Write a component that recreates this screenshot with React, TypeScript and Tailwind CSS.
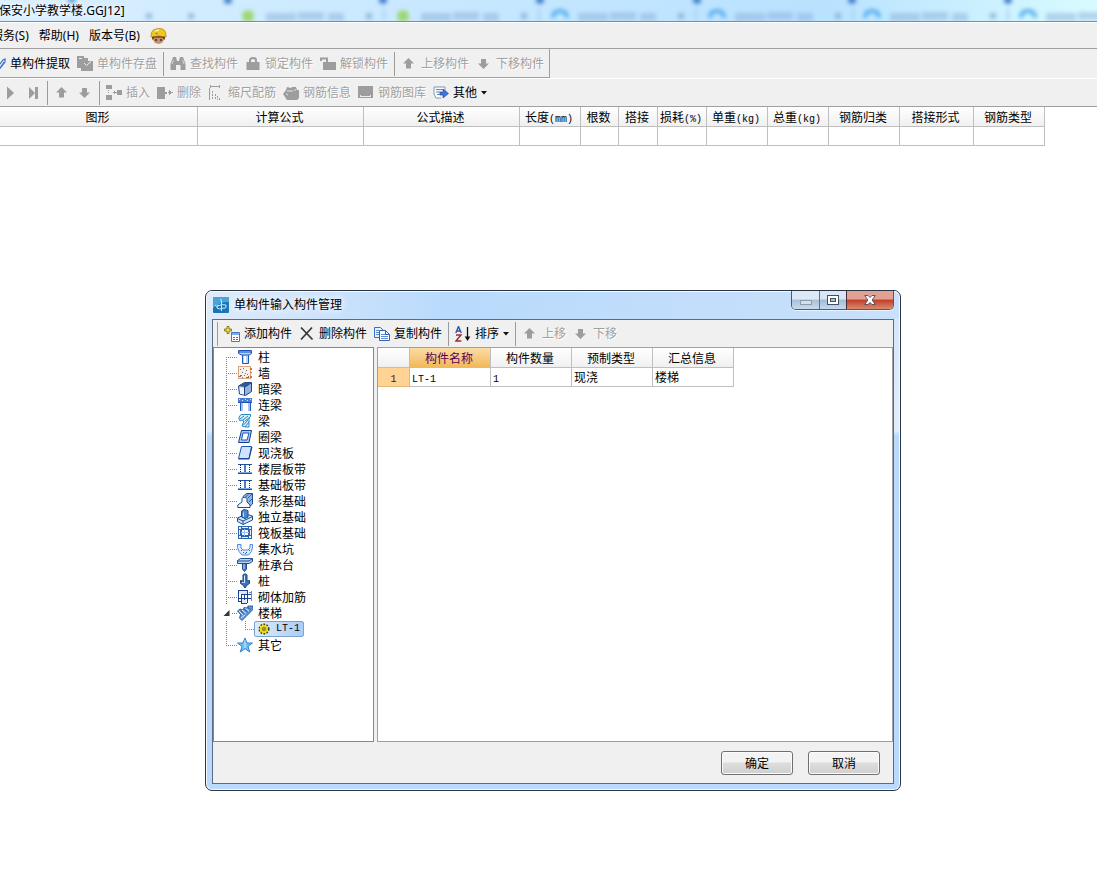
import type { ReactNode } from 'react';

const BLUE = '#1f55b5';
const GRAY = '#9d9d9d';

type IconProps = { children: ReactNode; crisp?: boolean };

const Icon = ({ children, crisp = false }: IconProps) => (
  <svg
    viewBox="0 0 16 16"
    className="h-4 w-4 shrink-0"
    fill="none"
    shapeRendering={crisp ? 'crispEdges' : 'auto'}
    aria-hidden="true"
  >
    {children}
  </svg>
);

/* Toolbar icons */
const UpIcon = () => (
  <Icon>
    <path d="M7.500 2l5.500 5.500h-3v5H5v-5H2z" fill={GRAY} />
  </Icon>
);

const DownIcon = () => (
  <Icon>
    <path d="M7.500 13L2 7.500h3V3h5v4.500h3z" fill={GRAY} />
  </Icon>
);

const PlayIcon = () => (
  <Icon>
    <path d="M5 1.500L12 8l-7 6.500z" fill={GRAY} />
  </Icon>
);

const LastIcon = () => (
  <Icon>
    <path d="M4 2l6 6V2h3v12h-3V8l-6 6z" fill={GRAY} />
  </Icon>
);

const PencilIcon = () => (
  <Icon>
    <path d="M6 13l7-9 2-1v3l-5 6.500H6z" stroke="#3c6ec4" strokeWidth="1.200" fill="#dfeaff" />
    <path d="M10 12l4-6" stroke="#3c6ec4" />
  </Icon>
);

const SaveIcon = () => (
  <Icon crisp>
    <path d="M0 0h7v2h4v3H5v7H0z" fill={GRAY} />
    <path d="M5 5h11v10H4V7h1z" fill={GRAY} />
    <path d="M2 2h3v1H2zM12 3h1v2h-1z" fill="#efefef" />
    <path d="M7 7l2.500 2.500L14 5.500" stroke="#efefef" shapeRendering="auto" />
  </Icon>
);

const BinocularIcon = () => (
  <Icon>
    <path d="M3 1h3l1 4h2l1-4h3l2.500 7v6h-5V9H6v5H.5V8z" fill={GRAY} />
    <path d="M3.500 4L2 8M12.500 4L14 8" stroke="#d8d8d8" />
  </Icon>
);

const LockIcon = () => (
  <Icon>
    <path d="M5 7V4.500Q5 2 8 2t3 2.500V7" stroke={GRAY} strokeWidth="2" />
    <path d="M1.500 6h13v8h-13z" fill={GRAY} />
  </Icon>
);

const UnlockIcon = () => (
  <Icon>
    <path d="M1 5V2.500h6V7" stroke={GRAY} strokeWidth="2" />
    <path d="M3 6h13v8H3z" fill={GRAY} />
  </Icon>
);

const InsertIcon = () => (
  <Icon crisp>
    <path d="M0 0h6v4H0zM0 10h6v5H0zM11 5h5v5h-5zM7 7h4v1H7zM8 6h1v3H8z" fill={GRAY} />
    <path d="M2 5h1v1H2zM2 7h1v1H2z" fill={GRAY} />
  </Icon>
);

const RemoveIcon = () => (
  <Icon crisp>
    <path d="M0 2h8v12H0z" fill={GRAY} />
    <path d="M8 7h2v2H8zM11 7h5v1h-5zM12 5h1v5h-1zM13 6h1v3h-1z" fill={GRAY} />
  </Icon>
);

const ScaleIcon = () => (
  <Icon crisp>
    <path d="M3 1h8v1H3zM2 0h1v3H2zM11 0h1v3h-1zM1 3h1v12H1z" fill={GRAY} />
    <path d="M4.500 6v9M7.500 9v6M9.500 11v4M11.500 13v2" stroke={GRAY} strokeDasharray="2 1" />
  </Icon>
);

const InfoIcon = () => (
  <Icon>
    <path d="M4 2l4 1 1-1h4l1 3h2v8l-2 2H4l-2-3-2-3 3-4z" fill={GRAY} />
    <path d="M4 6h6M3 9l2 1M12 4v2" stroke="#e4e4e4" />
  </Icon>
);

const LibraryIcon = () => (
  <Icon crisp>
    <path d="M0 1h15v12H0z" fill={GRAY} />
    <path d="M2 10h1v1h9v-1h1v2H2z" fill="#ededed" />
  </Icon>
);

const OtherIcon = () => (
  <Icon>
    <path d="M1 2h11v5M1 2v7l2 4h5" stroke="#7c93c0" fill="#fff" />
    <path d="M3 4.500h7M3 7h4M4 9.500h3" stroke="#6d88bd" />
    <path d="M7 7h3V4l5.500 4.500L10 13v-3H7z" fill="#3f74d8" stroke="#24479a" strokeWidth=".6" />
  </Icon>
);

const AddIcon = () => (
  <Icon>
    <path d="M3 .5h2v2.500h2.500v2H5v2.500H3V5H.5V3H3z" fill="#f7df4b" stroke="#8d7a1d" />
    <path d="M7.500 6.500h8v9h-8z" fill="#fff" stroke="#4679c2" />
    <path d="M8 7h7v2H8z" fill="#82abe5" />
    <path d="M9 11.500h2M12 11.500h2M9 13.500h2M12 13.500h2" stroke="#4679c2" />
  </Icon>
);

const CrossIcon = () => (
  <Icon>
    <path d="M2 1.500l11.500 12M13 1.500L2 13.500" stroke="#3a3a3a" strokeWidth="1.800" />
  </Icon>
);

const CopyIcon = () => (
  <Icon>
    <path d="M.5 1.500h6l3 3v7h-9z" fill="#e4efff" stroke="#3b6fc4" />
    <path d="M5.500 4.500h6l4 4v6h-10z" fill="#fff" stroke="#2e62b8" />
    <path d="M2 4.500h3M2 6.500h3M2 8.500h3M7 8.500h5M7 10.500h7M7 12.500h7" stroke="#5d8bd6" />
    <path d="M11.500 4.500v4h4" stroke="#2e62b8" />
  </Icon>
);

const SortIcon = () => (
  <Icon>
    <path d="M.8 7L3.500.5 6.200 7M1.800 5h3.400" stroke="#2d55a5" strokeWidth="1.400" />
    <path d="M1 9h5l-5 6h5.300" stroke="#a02c2c" strokeWidth="1.400" />
    <path d="M12.500 1v12" stroke="#111" strokeWidth="1.300" />
    <path d="M9.700 10.500h5.600L12.500 15z" fill="#111" />
  </Icon>
);

const Worker = () => (
  <svg viewBox="0 0 17 16" className="h-4 w-[17px] shrink-0" aria-hidden="true">
    <path d="M3 7h11v5l-2 3-3.500 1L5 15l-2-3z" fill="#c98f6d" />
    <path d="M1.500 7h14l-1 5-2-2.500h-8L2.500 12z" fill="#53301f" />
    <path d="M1 7.500Q1 1 8.500.5T16 7.500q1 1-.5 1.500-7-2-14 0Q0 8.500 1 7.500z" fill="#f2c81c" stroke="#a87d12" strokeWidth=".7" />
    <path d="M5 3.500q2-1.500 4-1.500" stroke="#fff3a0" strokeWidth="1.500" fill="none" />
    <path d="M6 11v2M11 11v2" stroke="#2d1a12" strokeWidth="1.300" />
    <path d="M5.500 5.500h2" stroke="#4f8ac4" strokeWidth="1.500" />
  </svg>
);

const AppLogo = () => (
  <Icon>
    <rect width="16" height="16" rx="1" fill="#1d74b5" />
    <path d="M0 0h16v5Q8 4 0 11z" fill="#4ba3d6" />
    <path d="M8.500 14V4Q8.500 2 7 2.500M2 8q1 2 4 .5t7-.5q1 3-2 3.500M6 8q-3 1-2 3 2 2 7 0" stroke="#c4ecff" />
  </Icon>
);

const Caret = () => (
  <svg viewBox="0 0 6 4" className="h-1 w-1.5 shrink-0" aria-hidden="true">
    <path d="M0 0h6L3 3.500z" fill="#111" />
  </svg>
);

/* Tree icons */
const ColumnIcon = () => (
  <Icon>
    <path d="M1.500 1.500h13v3l-3 2v8h-6v-8l-4-2z" fill="#b9d6fb" stroke={BLUE} />
    <path d="M2 2h12v2H2z" fill="#5b8ee0" />
    <path d="M5 6h7" stroke={BLUE} />
    <path d="M7 7h2v7H7z" fill="#fff" />
  </Icon>
);

const WallIcon = () => (
  <Icon crisp>
    <path d="M1 1h12v12H1z" fill="#f7efe8" stroke="#d9a488" />
    <path d="M3 4h1v1H3zM6 3h1v1H6zM9 5h1v1H9zM5 7h1v1H5zM8 8h1v1H8zM3 10h2v1H3zM7 10h1v1H7zM10 9h1v1h-1zM2 11h2v1H2zM5 12h1v1H5zM9 12h3v1H9zM11 11h1v1h-1z" fill="#77736f" />
    <path d="M13 3h2v2h-2zM13 7h2v1h-2zM13 11h2v2h-2z" fill="#d4752c" />
  </Icon>
);

const HiddenBeamIcon = () => (
  <Icon>
    <path d="M1.500 5l6-3.500h7v9L8.500 14.500l-6-1.500z" fill="#8fb3e6" stroke="#203f78" />
    <path d="M2 5l6-3.500h6L8 6z" fill="#36558f" />
    <path d="M2.500 6l4.500.7v7l-4-1z" fill="#e9f3ff" />
    <path d="M7.500 6v8M8 6l6-4" stroke="#203f78" />
  </Icon>
);

const LinkBeamIcon = () => (
  <Icon crisp>
    <path d="M1 1h14v4H1z" fill="#477fd8" />
    <path d="M2 2h1v1H2zM5 3h1v1H5zM8 2h1v1H8zM10 3h1v1h-1zM13 2h1v1h-1z" fill="#dbe8ff" />
    <path d="M3 5h3v9H3zM11 5h3v9h-3z" fill="#a7c4f0" />
    <path d="M3.500 5v9M13.500 5v9M1 5.500h14" stroke={BLUE} />
  </Icon>
);

const BeamIcon = () => (
  <Icon>
    <path d="M2 4l2-2.500h9.500v2L12 5v9H8.500L5 13l2-5-2-1-2 1-1-2z" fill="#d2efff" stroke="#2b87c4" />
    <path d="M3 6l4-3M6 7l5-4M8 8l5-4M6.500 12L11 7M8 14l4-5" stroke="#2b87c4" />
  </Icon>
);

const RingBeamIcon = () => (
  <Icon>
    <path d="M4.500 1.500h10l-2.500 12H1.500z" fill="#a9c8f5" stroke="#163f93" />
    <path d="M6 4h6l-2 7H4.500z" fill="#fff" stroke={BLUE} />
  </Icon>
);

const SlabIcon = () => (
  <Icon>
    <path d="M4.500 1.500h10l-2.500 12H1.500z" fill="#cfe3ff" stroke={BLUE} />
    <path d="M1.500 14h10.500l3-12" stroke="#163f93" />
  </Icon>
);

const StripIcon = () => (
  <Icon crisp>
    <path d="M1 3h14v1H1zM1 12h14v1H1z" fill="#234f9e" />
    <path d="M1 11h14v1H1z" fill="#7da8e6" />
    <path d="M7 4h2v7H7z" fill="#4a7fd4" />
    <path d="M3.500 4v7M12.500 4v7" stroke="#222" strokeDasharray="1 1" />
  </Icon>
);

const StripFootingIcon = () => (
  <Icon>
    <path d="M6 3.500L9.500.5h6V11L13 13H8z" fill="#8fb6e6" stroke="#1e4f96" />
    <path d="M8.500 4l3-3M11 5l4-4M12 9l3-3" stroke="#2b5ea8" />
    <path d="M5 5.500q0-1 2.500-1t2.500 1V9l3 3v2.500H.8V12L5 9z" fill="#f7fbff" stroke="#1e4f96" />
  </Icon>
);

const IsolatedFootingIcon = () => (
  <Icon>
    <path d="M.5 9L9 5l6.500 2v4L6 15.500l-5.500-3z" fill="#d3e5fa" stroke="#1c4a8c" />
    <path d="M.5 9.500L6 12l9.500-4.500M6 12v3.500" stroke="#1c4a8c" />
    <path d="M4.500 2L7 .5l4 1V8l-3 1.500L4.500 8z" fill="#5187cc" stroke="#1c4a8c" />
    <path d="M6.500 3.500v4.500" stroke="#b9d6f7" />
  </Icon>
);

const RaftIcon = () => (
  <Icon crisp>
    <path d="M1 1h14v13H1z" fill="#2c64b0" />
    <path d="M2 2h2v2H2zM5 2h6v1H5zM12 2h2v2h-2zM2 5h1v5H2zM13 5h1v5h-1zM2 11h2v2H2zM5 12h6v1H5zM12 11h2v2h-2z" fill="#e6f2ff" />
    <path d="M5 5h6v5H5z" fill="#fff" />
    <path d="M7.500 4v7M4 7.500h8" stroke="#9dbfea" />
  </Icon>
);

const SumpIcon = () => (
  <Icon>
    <path d="M.5 3.500H4V7l2 2h5l2-2V3.500h2.500V9l-4 5H5l-3-3.500z" fill="#dceaff" />
    <path d="M.5 3.500H4V7l2 2h5l2-2V3.500h2.500M.5 3.500v3l1.500 4L5 14h6.500l3-3.500 1-4v-3" stroke="#4e8ade" />
    <path d="M4 9.500h1M6 11.500h1M9 11.500h1M12 9.500h1M8 12.500h1" stroke="#2b62b0" />
  </Icon>
);

const PileCapIcon = () => (
  <Icon>
    <path d="M.5 3.500l3-2h12v3L12 6.500H.5z" fill="#b9d6f7" stroke="#1f4f8e" />
    <path d="M.5 4H12l3.500-2.500" stroke="#1f4f8e" />
    <path d="M5.500 7h4v5l-2 2.500-2-2.500z" fill="#3f78bf" stroke="#1f4f8e" />
    <path d="M7 7v5" stroke="#cfe3fb" />
  </Icon>
);

const PileIcon = () => (
  <Icon>
    <path d="M6 2q0-1 2-1t2 1v6l2.500-.5v3L10 12l-2 3-2-3-2.500-1.500v-3L6 8z" fill="#3b74bd" stroke="#1b457f" />
    <path d="M7.500 2.500V10M5 9.500h1.500" stroke="#d6e8ff" />
  </Icon>
);

const MasonryIcon = () => (
  <Icon crisp>
    <path d="M1 1h10v4H1zM5 9h4v6H5z" fill="#dfeafa" />
    <path d="M1.500 1v11M10.500 1v13M4.500 5v10M7.500 5v6M1 1.500h10M4 5.500h11M1 9.500h14M1 12.500h4M5 14.500h5" stroke="#1a4193" />
    <path d="M14.500 2v10M12 3.500h3" stroke="#5d8bd6" />
  </Icon>
);

const StairIcon = () => (
  <Icon>
    <path d="M.5 6L3 4l3 1 1-2.500 3 .5 1-2h5v3.500L5 15.500 2.500 13l1-3.500z" fill="#5f95dc" stroke="#1c4a8c" strokeWidth=".8" />
    <path d="M2 6l4 4M5 5l4 3.500M8.500 3.500L12 6M4 13l4-3" stroke="#e2efff" />
    <path d="M3.500 5.500l4 3.500M7 4l3.500 3M11 2.500l2.500 2" stroke="#1c4a8c" strokeWidth=".8" />
  </Icon>
);

const StarIcon = () => (
  <Icon>
    <path d="M8 1l2 5h5.500l-4.500 3.500 1.800 5.500L8 11.700 3.200 15 5 9.500.5 6H6z" fill="#6fc0f5" stroke="#2578c4" strokeWidth=".9" />
    <path d="M8 3.500V11" stroke="#c9ecff" />
  </Icon>
);

const GearIcon = () => (
  <svg viewBox="0 0 12 12" className="h-3 w-3 shrink-0" aria-hidden="true">
    <circle cx="6" cy="6" r="4.700" fill="#f8e41c" stroke="#3b3600" strokeWidth="1.600" strokeDasharray="1.700 1.300" />
    <circle cx="6" cy="6" r="4" fill="#fbe91e" />
    <path d="M6 2.500v7M2.500 6h7M3.500 3.500l5 5M8.500 3.500l-5 5" stroke="#8a8000" strokeWidth=".6" />
    <circle cx="6" cy="6" r="1.200" fill="#fff" stroke="#3b3600" strokeWidth=".8" />
  </svg>
);

type ToolProps = { icon: ReactNode; text?: string; label?: string; disabled?: boolean; menu?: boolean };

const Tool = ({ icon, text, label, disabled = false, menu = false }: ToolProps) => (
  <button
    type="button"
    disabled={disabled}
    aria-label={label}
    className="flex h-5 shrink-0 items-center gap-1 whitespace-nowrap text-black disabled:text-[#a0a0a0] disabled:[text-shadow:1px_1px_0_white]"
  >
    {icon}
    {text && <span>{text}</span>}
    {menu && <Caret />}
  </button>
);

const Divider = () => <span className="-mx-px h-6 w-px shrink-0 bg-[#9a9a9a]" />;

// latin characters in the tables take half the width of a hanzi
const Half = ({ children }: { children: ReactNode }) => (
  <span className="font-['Liberation_Mono',monospace] text-[10px] leading-none">{children}</span>
);

const headCell =
  'h-5 border-r border-b border-[#bfbfbf] bg-linear-to-b from-white to-[#f0f0f0] p-0 pt-0.5 pr-0.5 text-center font-normal whitespace-nowrap';
const bodyCell = 'h-[19px] border-r border-b border-[#bfbfbf] p-0 pt-px pl-0.5 whitespace-nowrap';

const columns = [
  { name: '图形', width: 'w-[198px]' },
  { name: '计算公式', width: 'w-[166px]' },
  { name: '公式描述', width: 'w-[156px]' },
  { name: '长度', unit: '(mm)', width: 'w-[61px]' },
  { name: '根数', width: 'w-[38px]' },
  { name: '搭接', width: 'w-[39px]' },
  { name: '损耗', unit: '(%)', width: 'w-[49px]' },
  { name: '单重', unit: '(kg)', width: 'w-[61px]' },
  { name: '总重', unit: '(kg)', width: 'w-[61px]' },
  { name: '钢筋归类', width: 'w-[71px]' },
  { name: '搭接形式', width: 'w-[74px]' },
  { name: '钢筋类型', width: 'w-[71px]' },
];

const RebarTable = () => (
  <table className="w-[1045px] table-fixed border-separate border-spacing-0 leading-4">
    <thead>
      <tr>
        {columns.map((c) => (
          <th key={c.name} className={`${headCell} ${c.width}`}>
            {c.name}
            {c.unit && <Half>{c.unit}</Half>}
          </th>
        ))}
      </tr>
    </thead>
    <tbody>
      <tr>
        {columns.map((c) => (
          <td key={c.name} className={bodyCell} />
        ))}
      </tr>
    </tbody>
  </table>
);

const tree = [
  { name: '柱', icon: <ColumnIcon /> },
  { name: '墙', icon: <WallIcon /> },
  { name: '暗梁', icon: <HiddenBeamIcon /> },
  { name: '连梁', icon: <LinkBeamIcon /> },
  { name: '梁', icon: <BeamIcon /> },
  { name: '圈梁', icon: <RingBeamIcon /> },
  { name: '现浇板', icon: <SlabIcon /> },
  { name: '楼层板带', icon: <StripIcon /> },
  { name: '基础板带', icon: <StripIcon /> },
  { name: '条形基础', icon: <StripFootingIcon /> },
  { name: '独立基础', icon: <IsolatedFootingIcon /> },
  { name: '筏板基础', icon: <RaftIcon /> },
  { name: '集水坑', icon: <SumpIcon /> },
  { name: '桩承台', icon: <PileCapIcon /> },
  { name: '桩', icon: <PileIcon /> },
  { name: '砌体加筋', icon: <MasonryIcon /> },
  { name: '楼梯', icon: <StairIcon />, open: true },
  { name: '其它', icon: <StarIcon /> },
];

// dotted guide line in front of a tree row
const Guide = ({ d }: { d: string }) => (
  <svg viewBox="0 0 11 16" className="h-4 w-[11px] shrink-0" shapeRendering="crispEdges" aria-hidden="true">
    <path d={d} stroke="#808080" strokeDasharray="1 1" fill="none" />
  </svg>
);

const guidePath = (i: number) => {
  if (i === 0) return 'M.5 8v8M0 8.500h11';
  if (i === tree.length - 1) return 'M.5 0v8M0 8.500h11';
  return 'M.5 0v16M0 8.500h11';
};

const Tree = () => (
  <ul className="w-[161px] shrink-0 border border-[#828790] bg-white pt-px">
    {tree.map((node, i) => (
      <li key={node.name}>
        <button type="button" className="flex h-4 items-center pl-3 leading-4">
          {node.open ? (
            <svg viewBox="0 0 15 16" className="-ml-1 h-4 w-[15px] shrink-0" aria-hidden="true">
              <path d="M7.500 5v6h-6z" fill="#333" />
              <path d="M10 8.500h5" stroke="#808080" strokeDasharray="1 1" />
            </svg>
          ) : (
            <Guide d={guidePath(i)} />
          )}
          {node.icon}
          <span className="pt-0.5 pl-[5px]">{node.name}</span>
        </button>
        {node.open && (
          <ul>
            <li className="flex h-4 items-center pl-3">
              <Guide d="M.5 0v16" />
              <span className="w-2 shrink-0" />
              <Guide d="M.5 0v8M0 8.500h9" />
              <button
                type="button"
                className="-ml-0.5 flex h-4 items-center gap-1.5 rounded-xs border border-[#7da2ce] bg-linear-to-r from-[#dcebfc] to-[#a9cdf8] px-[3px]"
              >
                <GearIcon />
                <Half>LT-1</Half>
              </button>
            </li>
          </ul>
        )}
      </li>
    ))}
  </ul>
);

const ComponentTable = () => (
  <table className="w-[356px] table-fixed border-separate border-spacing-0 leading-4">
    <thead>
      <tr>
        <th className={`${headCell} w-8`} />
        <th className="h-5 w-[81px] border-r border-b border-[#bfbfbf] bg-linear-to-b from-[#fbdca4] to-[#f2b858] p-0 pt-0.5 pr-0.5 font-normal text-[#5c0056]">
          构件名称
        </th>
        <th className={`${headCell} w-[81px]`}>构件数量</th>
        <th className={`${headCell} w-[81px]`}>预制类型</th>
        <th className={`${headCell} w-[81px]`}>汇总信息</th>
      </tr>
    </thead>
    <tbody>
      <tr>
        <th className="h-[19px] border-r border-b border-[#e0b878] bg-[#ffd393] p-0 pt-px font-normal text-[#5c0056]">
          <Half>1</Half>
        </th>
        <td className={bodyCell}><Half>LT-1</Half></td>
        <td className={bodyCell}><Half>1</Half></td>
        <td className={bodyCell}>现浇</td>
        <td className={bodyCell}>楼梯</td>
      </tr>
    </tbody>
  </table>
);

const PushButton = ({ children }: { children: ReactNode }) => (
  <button
    type="button"
    className="h-6 w-[72px] rounded-[3px] border border-[#707070] bg-linear-to-b from-[#f3f3f3] from-45% via-[#dedede] via-50% to-[#cfcfcf] pt-0.5 shadow-[inset_0_0_0_1px_#fbfbfb]"
  >
    {children}
  </button>
);

const WindowButtons = () => (
  <div className="flex h-[19px] overflow-hidden rounded-b-[5px] border border-t-0 border-[#4b5c77] shadow-[0_1px_0_0_#e6f2ff]">
    <button type="button" aria-label="最小化" className="flex w-7 items-center justify-center border-r border-[#5d6f8a] bg-linear-to-b from-[#dce9f6] from-45% via-[#abc0d6] via-50% to-[#c6dcf0]">
      <svg viewBox="0 0 12 12" className="h-3 w-3" shapeRendering="crispEdges" aria-hidden="true">
        <path d="M.5 6.500h11v4H.5z" fill="#d5dfe9" stroke="#8e9cad" />
      </svg>
    </button>
    <button type="button" aria-label="最大化" className="flex w-[27px] items-center justify-center border-r border-[#4b2a35] bg-linear-to-b from-[#d8e6f6] from-45% via-[#a3bad3] via-50% to-[#c3dbf1]">
      <svg viewBox="0 0 12 12" className="h-3 w-3" shapeRendering="crispEdges" aria-hidden="true">
        <path d="M.5 1.500h11v9H.5z" fill="#fff" stroke="#454f62" />
        <path d="M3.500 4.500h5v3h-5z" fill="#a9bdd6" stroke="#454f62" />
      </svg>
    </button>
    <button type="button" aria-label="关闭" className="flex w-[46px] items-center justify-center bg-linear-to-b from-[#e3a193] from-45% via-[#c03c28] via-50% to-[#d98a6b]">
      <svg viewBox="0 0 12 12" className="h-3 w-3" aria-hidden="true">
        <path d="M.8 1.500h3.200L6 3.500l2-2h3.200L8.200 6l3 4.500H8l-2-2-2 2H.8l3-4.500z" fill="#fff" stroke="#4a4c60" strokeWidth=".9" />
      </svg>
    </button>
  </div>
);

const Dialog = () => (
  <section
    role="dialog"
    aria-label="单构件输入构件管理"
    className="absolute top-[290px] left-[205px] w-[696px] rounded-[7px] border border-[#2b3442] bg-linear-to-b from-[#d3e6fb] from-0% via-[#e0edfb] via-28% to-[#b9dafc] to-29% px-1.5 pb-1.5 shadow-[inset_0_0_0_1px_#f2f9ff]"
  >
    <header className="-mx-[5px] flex h-7 items-start justify-between rounded-t-[5px] border-t border-[#f2f9ff] bg-linear-to-r from-[#deebfa] via-[#b9dafc] via-35% to-[#c9e1fa] pl-1.5">
      <h1 className="flex items-center gap-[5px] pt-[5px] leading-4">
        <AppLogo />
        <span className="[text-shadow:0_0_6px_white,0_0_10px_white]">单构件输入构件管理</span>
      </h1>
      <div className="-mt-px pr-[5px]">
        <WindowButtons />
      </div>
    </header>

    <div className="border border-[#5b6b80] bg-[#f0f0f0]">
      <div className="flex h-[27px] items-center gap-[7px] pl-[5px]">
        <Divider />
        <Tool icon={<AddIcon />} text="添加构件" />
        <Tool icon={<CrossIcon />} text="删除构件" />
        <Tool icon={<CopyIcon />} text="复制构件" />
        <Divider />
        <Tool icon={<SortIcon />} text="排序" menu />
        <Divider />
        <Tool icon={<UpIcon />} text="上移" disabled />
        <Tool icon={<DownIcon />} text="下移" disabled />
      </div>

      <div className="flex h-[395px] gap-[3px]">
        <Tree />
        <div className="grow border border-[#a0a0a0] bg-white">
          <ComponentTable />
        </div>
      </div>

      <footer className="flex h-[41px] items-center justify-end gap-[15px] pr-[13px]">
        <PushButton>确定</PushButton>
        <PushButton>取消</PushButton>
      </footer>
    </div>
  </section>
);

// browser tabs showing blurred through the glass title bar
const tabs = [248, 403, 560, 717, 872, 1028];

const Glass = () => (
  <svg viewBox="0 0 1097 21" className="absolute top-0 left-0 h-[21px] w-[1097px]" aria-hidden="true">
    <defs>
      <filter id="glass" x="-20%" y="-50%" width="140%" height="200%">
        <feGaussianBlur stdDeviation="2" />
      </filter>
    </defs>
    <g filter="url(#glass)">
      {tabs.map((x, i) => (
        <g key={x}>
          {i < 2 ? (
            <circle cx={x} cy="16" r="6" fill="#9bd86f" />
          ) : (
            <path d={`M${x - 7} 18q0-7 7-7t7 7`} stroke="#58b0ef" strokeWidth="4" fill="none" />
          )}
          <path d={`M${x + 18} 17h30m2-1h26m4 1h16`} stroke="#8aaed8" strokeWidth="8" opacity=".5" />
          <path d={`M${x + 118} 16h6`} stroke="#7296cc" strokeWidth="6" opacity=".6" />
          <path d={`M${x + 136} 8v13`} stroke="#a5cdf0" strokeWidth="2" />
          <circle cx={x - 20} cy="0" r="4" fill="#3f7ecb" />
        </g>
      ))}
      <circle cx="72" cy="0" r="4" fill="#5b95d8" />
      <path d="M146 16h6m36 0h6" stroke="#8fb4dc" strokeWidth="5" />
    </g>
  </svg>
);

export default function App() {
  return (
    <div className="relative min-h-screen overflow-hidden bg-white font-['Noto_Sans','Noto_Sans_CJK_SC',sans-serif] text-[12px] leading-4 text-black">
      <header className="relative h-[22px] overflow-hidden border-b border-[#6f8fb8] bg-linear-to-r from-[#d9efff] via-[#b9e2ff] via-75% to-[#d9fbff]">
        <Glass />
        <h2 className="relative -ml-px pt-[3px] [text-shadow:0_0_6px_white,0_0_8px_white]">保安小学教学楼.GGJ12]</h2>
      </header>

      <nav className="flex h-[27px] items-center gap-2.5 border-t border-b border-t-white border-b-[#a0a0a0] bg-[#f0f0f0]">
        <button type="button" className="-ml-[9px] shrink-0">服务(S)</button>
        <button type="button" className="shrink-0">帮助(H)</button>
        <button type="button" className="shrink-0">版本号(B)</button>
        <Worker />
      </nav>

      <div className="border-b border-white bg-[#f0f0f0]">
        <div className="flex h-[29px] w-[550px] items-center gap-[7px] border-r border-b border-[#a0a0a0] pt-0.5">
          <span className="-ml-2.5">
            <Tool icon={<PencilIcon />} text="单构件提取" />
          </span>
          <Tool icon={<SaveIcon />} text="单构件存盘" disabled />
          <Divider />
          <Tool icon={<BinocularIcon />} text="查找构件" disabled />
          <Tool icon={<LockIcon />} text="锁定构件" disabled />
          <Tool icon={<UnlockIcon />} text="解锁构件" disabled />
          <Divider />
          <Tool icon={<UpIcon />} text="上移构件" disabled />
          <Tool icon={<DownIcon />} text="下移构件" disabled />
        </div>
      </div>

      <div className="flex h-7 items-center gap-[7px] border-b border-[#a0a0a0] bg-[#f0f0f0] pl-0.5">
        <Tool icon={<PlayIcon />} label="下一条" disabled />
        <Tool icon={<LastIcon />} label="最后一条" disabled />
        <Divider />
        <Tool icon={<UpIcon />} label="上移" disabled />
        <Tool icon={<DownIcon />} label="下移" disabled />
        <Divider />
        <Tool icon={<InsertIcon />} text="插入" disabled />
        <Tool icon={<RemoveIcon />} text="删除" disabled />
        <Tool icon={<ScaleIcon />} text="缩尺配筋" disabled />
        <Tool icon={<InfoIcon />} text="钢筋信息" disabled />
        <Tool icon={<LibraryIcon />} text="钢筋图库" disabled />
        <Tool icon={<OtherIcon />} text="其他" menu />
      </div>

      <RebarTable />
      <Dialog />
    </div>
  );
}
